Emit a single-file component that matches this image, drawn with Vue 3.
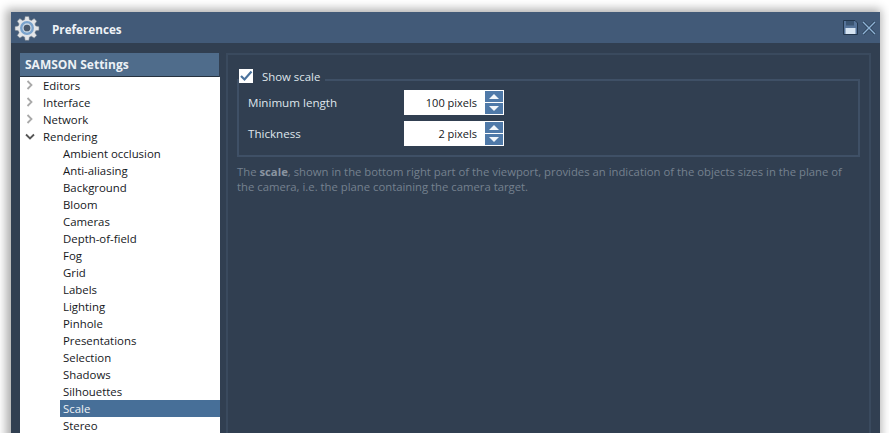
<script setup>
const top = ['Editors', 'Interface', 'Network']
const sub = ['Ambient occlusion','Anti-aliasing','Background','Bloom','Cameras','Depth-of-field','Fog','Grid','Labels','Lighting','Pinhole','Presentations','Selection','Shadows','Silhouettes','Scale','Stereo']
const spins = [{label:'Minimum length',value:'100 pixels'},{label:'Thickness',value:'2 pixels'}]
</script>

<template>
  <div class="page">
    <div class="window">
      <header class="titlebar">
        <svg class="gear" width="26" height="26" viewBox="0 0 28 28">
          <path fill="#e3e5e8" stroke="#7d858e" stroke-width="0.6" d="M12 1.500h4l.6 3.500 2.200.9 2.900-2 2.800 2.800-2 2.900.9 2.200 3.500.6v4l-3.500.6-.9 2.200 2 2.900-2.800 2.800-2.900-2-2.200.9-.6 3.500h-4l-.6-3.500-2.200-.9-2.900 2-2.800-2.800 2-2.900-.9-2.200-3.500-.6v-4l3.500-.6.9-2.200-2-2.900 2.800-2.800 2.900 2 2.200-.9z"/>
          <circle cx="14" cy="14" r="7.500" fill="#7aa3cc"/>
          <circle cx="14" cy="14" r="5" fill="#c9d6e3"/>
          <circle cx="14" cy="14" r="3.600" fill="#4a596b"/>
        </svg>
        <span class="title">Preferences</span>
        <svg class="save" width="15" height="15" viewBox="0 0 15 15">
          <path d="M0.500 0.500h11.500l2.500 2.500v11.500h-14z" fill="#56749a" stroke="#22364d"/>
          <rect x="3" y="1" width="8" height="4.500" fill="#3a5472"/>
          <rect x="2.500" y="8" width="10" height="6" fill="#d6e4f2"/>
        </svg>
        <svg class="close" width="14" height="14" viewBox="0 0 14 14">
          <path d="M1 1l12 12M13 1L1 13" stroke="#24384f" stroke-width="3" fill="none" opacity=".7"/>
          <path d="M1 1l12 12M13 1L1 13" stroke="#8fb3d6" stroke-width="1.400" fill="none"/>
        </svg>
      </header>
      <div class="body">
        <aside class="side">
          <div class="side-head">SAMSON Settings</div>
          <ul class="tree">
            <li v-for="t in top" :key="t" class="row top">
              <svg class="chev" width="8" height="10" viewBox="0 0 8 10"><path d="M1.500 1l4 4-4 4" fill="none" stroke="#a9a9a9" stroke-width="1.800"/></svg>
              {{ t }}
            </li>
            <li class="row top">
              <svg class="chev down" width="10" height="8" viewBox="0 0 10 8"><path d="M1 1.500l4 4 4-4" fill="none" stroke="#555" stroke-width="1.800"/></svg>
              Rendering
            </li>
            <li v-for="s in sub" :key="s" class="row child" :class="{ sel: s === 'Scale' }">{{ s }}</li>
          </ul>
        </aside>
        <main class="pane">
          <fieldset class="group">
            <legend class="legend">
              <span class="check">
                <svg width="14" height="14" viewBox="0 0 14 14"><path d="M2 7l3.500 3.500L12.500 2.500" fill="none" stroke="#4a729c" stroke-width="2.200"/></svg>
              </span>
              <span class="legend-text">Show scale</span>
            </legend>
            <div class="fields">
              <div v-for="s in spins" :key="s.label" class="field">
                <span class="label">{{ s.label }}</span>
                <div class="spin">
                  <span class="value">{{ s.value }}</span>
                  <span class="arrows">
                    <span class="arrow"><i class="up"></i></span>
                    <span class="arrow"><i class="dn"></i></span>
                  </span>
                </div>
              </div>
            </div>
          </fieldset>
          <p class="help">The <b>scale</b>, shown in the bottom right part of the viewport, provides an indication of the objects sizes in the plane of the camera, i.e. the plane containing the camera target.</p>
        </main>
      </div>
    </div>
  </div>
</template>

<style>
html, body { margin: 0; background: #fff; overflow: hidden; }
</style>

<style scoped>
.page { width: 889px; height: 433px; box-sizing: border-box; padding: 12px 9px 0 11px; overflow: hidden; font-family: "Open Sans", "Noto Sans", sans-serif; font-size: 11.4px; }
.window { height: 500px; background: #313f51; box-shadow: -2px 0 9px 3px rgba(0,0,0,.32); display: flex; flex-direction: column; }
.titlebar { height: 31px; background: #425a78; display: flex; align-items: center; padding-left: 3px; color: #eef2f6; flex: none; box-sizing: border-box; padding-top: 2px; }
.gear { margin-right: 12px; flex: none; margin-top: -1px; }
.title { font-weight: 700; font-size: 11.7px; flex: 1; }
.save { margin-right: 4px; margin-top: -2px; }
.close { margin-right: 4px; margin-top: -2px; }
.body { display: flex; padding: 10px 9px 0 9px; gap: 6px; flex: 1; }
.side { width: 200px; flex: none; }
.side-head { height: 23px; line-height: 23px; background: #4f6c8b; color: #edf1f5; font-weight: 700; font-size: 12px; padding-left: 5px; margin-right: 1px; border-bottom: 1px solid #26323f; }
.tree { list-style: none; margin: 0; padding: 0; background: #fff; color: #15181c; height: 400px; }
.row { height: 17px; line-height: 17px; position: relative; white-space: nowrap; }
.top { padding-left: 23px; }
.chev { position: absolute; left: 6px; top: 3px; }
.chev.down { left: 5px; top: 5px; }
.child { padding-left: 43px; }
.sel { background: #476f98; color: #eef2f6; margin-left: 40px; padding-left: 3px; }
.pane { flex: 1; border: 2px solid #3a4a5e; padding: 14px 9px 0 9px; min-width: 0; }
.group { margin: 0; padding: 0; border: 2px solid #3f5066; height: 88px; box-sizing: border-box; min-width: 0; }
.legend { display: flex; align-items: flex-start; gap: 9px; padding: 0 5px 0 0; color: #dfe5eb; margin-left: 0; height: 22px; font-size: 11.4px; }
.check { width: 14px; height: 14px; background: #fff; display: block; flex: none; }
.check svg { display: block; }
.legend-text { line-height: 15px; }
.fields { margin-top: -1px; display: flex; flex-direction: column; gap: 6px; }
.field { display: flex; align-items: center; height: 25px; padding-left: 9px; color: #dfe5eb; font-size: 11.6px; }
.label { width: 156px; }
.spin { display: flex; width: 100px; height: 25px; background: #fff; }
.value { flex: 1; text-align: right; line-height: 25px; padding-right: 8px; color: #15181c; font-size: 11px; }
.arrows { width: 19px; display: flex; flex-direction: column; gap: 1px; padding: 1px 1px 1px 0; box-sizing: border-box; }
.arrow { flex: 1; background: #4f79a8; display: flex; align-items: center; justify-content: center; }
.up { width: 0; height: 0; border-left: 5px solid transparent; border-right: 5px solid transparent; border-bottom: 5px solid #f2f6fa; }
.dn { width: 0; height: 0; border-left: 5px solid transparent; border-right: 5px solid transparent; border-top: 5px solid #f2f6fa; }
.help { margin: 7px 0 0; color: #75818f; line-height: 15px; font-size: 11.3px; }
.help b { font-weight: 700; color: #8a95a1; }
</style>
